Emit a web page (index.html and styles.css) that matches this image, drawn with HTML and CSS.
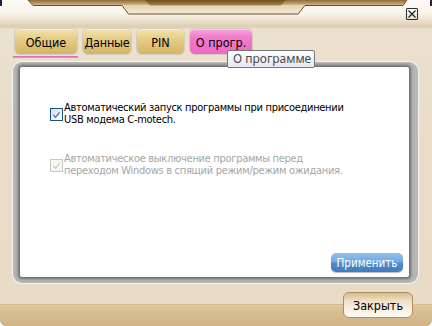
FILE: index.html
```html
<!DOCTYPE html>
<html lang="ru">
<head>
<meta charset="utf-8">
<title>Настройки</title>
<link rel="stylesheet" href="styles.css">
</head>
<body>
<div class="window">
  <span class="corner corner-tl"></span>
  <span class="corner corner-tr"></span>
  <header class="titlebar">
    <svg class="decor" viewBox="0 0 432 28" width="432" height="28">
      <defs>
        <linearGradient id="band" x1="0" y1="0" x2="0" y2="1">
          <stop offset="0" stop-color="#8e6a36"/>
          <stop offset="1" stop-color="#d4bc90"/>
        </linearGradient>
        <linearGradient id="core" x1="0" y1="0" x2="0" y2="1">
          <stop offset="0" stop-color="#6f4e20"/>
          <stop offset="1" stop-color="#b2905a"/>
        </linearGradient>
        <linearGradient id="well" x1="0" y1="0" x2="0" y2="1">
          <stop offset="0" stop-color="#e4d3b2"/>
          <stop offset="1" stop-color="#f4ecdc"/>
        </linearGradient>
      </defs>
      <polygon points="28,0 33,5.5 403,5.5 407,0" fill="url(#band)"/>
      <polygon points="145,0 151,6.5 280,6.5 286,0" fill="url(#core)"/>
      <polygon points="122,5.5 128.5,14 298,14 305,5.5" fill="url(#well)"/>
      <polyline points="28,0 33,5.5 122,5.5 128.5,14 298,14 305,5.5 403,5.5 407,0" fill="none" stroke="#6b4f25" stroke-width="1"/>
    </svg>
    <button class="xbtn" aria-label="Закрыть">
      <svg viewBox="0 0 10 10" width="10" height="10"><path d="M1.5 1.5 L8.5 8.5 M8.5 1.5 L1.5 8.5" stroke="#1a1a1a" stroke-width="1.1" fill="none"/></svg>
    </button>
  </header>

  <nav class="tabs">
    <div class="tab tab-gold tab-general">Общие</div>
    <div class="tab tab-gold tab-data">Данные</div>
    <div class="tab tab-gold tab-pin">PIN</div>
    <div class="tab tab-pink tab-about">О прогр.</div>
  </nav>
  <div class="tab-mark"></div>
  <div class="tooltip">О программе</div>

  <section class="frame">
    <div class="panel">
      <label class="check">
        <span class="box">
          <svg viewBox="0 0 11 11" width="11" height="11"><path d="M2.5 5 L4.5 7.5 L8.5 2.5 L8.5 4.2 L4.5 9 L2.5 6.8 Z" fill="#2f4a9e"/></svg>
        </span>
        <span class="lbl">Автоматический запуск программы при присоединении<br>USB модема C-motech.</span>
      </label>
      <label class="check check-disabled">
        <span class="box">
          <svg viewBox="0 0 11 11" width="11" height="11"><path d="M2.5 5 L4.5 7.5 L8.5 2.5 L8.5 4.2 L4.5 9 L2.5 6.8 Z" fill="#c2c2bc"/></svg>
        </span>
        <span class="lbl">Автоматическое выключение программы перед<br>переходом Windows в спящий режим/режим ожидания.</span>
      </label>
      <div class="actions">
        <button class="apply">Применить</button>
      </div>
    </div>
  </section>

  <footer class="footer">
    <button class="close">Закрыть</button>
  </footer>
</div>
</body>
</html>
```

FILE: styles.css
```css
html, body {
  margin: 0;
  padding: 0;
  background: #ffffff;
}

body {
  font-family: "DejaVu Sans Condensed", "DejaVu Sans", sans-serif;
  font-size: 11px;
  color: #000;
}

.window {
  position: relative;
  width: 432px;
  height: 326px;
  overflow: hidden;
  display: flex;
  flex-direction: column;
  border-radius: 0 0 6px 6px;
  background: linear-gradient(#fdfbf7 0, #f8f3ea 14px, #ddcdb0 27px, #ebe1cf 29px, #e9ddc9 120px, #e8dcc7 100%);
}

.corner {
  position: absolute;
  top: 0;
  width: 2px;
  height: 6px;
  background: #1c2150;
}
.corner-tl { left: 0; }
.corner-tr { right: 0; background: #3a1c3a; }

.titlebar {
  position: relative;
  height: 28px;
  flex: none;
  box-sizing: border-box;
  display: flex;
  justify-content: flex-end;
  align-items: flex-start;
  padding: 8px 14px 0 0;
}

.decor {
  position: absolute;
  left: 0;
  top: 0;
}

.xbtn {
  position: relative;
  width: 12px;
  height: 12px;
  box-sizing: border-box;
  padding: 0;
  border: 1px solid #2a2a2a;
  border-radius: 1px;
  background: linear-gradient(#ffffff, #e9e1d4);
  display: flex;
  align-items: center;
  justify-content: center;
}
.xbtn svg { display: block; }

.tabs {
  display: flex;
  gap: 4px;
  padding-left: 14px;
  height: 27px;
  flex: none;
}

.tab {
  box-sizing: border-box;
  height: 27px;
  border-radius: 6px;
  border: 1px solid #d2ccc1;
  display: flex;
  align-items: center;
  justify-content: center;
  padding-top: 1px;
  white-space: nowrap;
  font-size: 12.5px;
}
.tab-gold {
  background: linear-gradient(#f1e3ad 0, #e7d08c 35%, #dcc076 70%, #d4b567 100%);
  box-shadow: inset 0 1px 0 #fbf4d8;
}
.tab-pink {
  background: linear-gradient(#f8a6dc 0, #f27bcc 35%, #ee68c3 100%);
  box-shadow: inset 0 1px 0 #fcd0ec;
}
.tab-general { width: 64px; }
.tab-data { width: 50px; letter-spacing: -0.2px; }
.tab-pin { width: 49px; }
.tab-about { width: 64px; }

.tab-mark {
  flex: none;
  margin: 1px 0 0 13px;
  width: 65px;
  height: 2px;
  background: linear-gradient(#d463b4, #f194d4);
}

.tooltip {
  position: absolute;
  left: 227px;
  top: 50px;
  width: 88px;
  height: 18px;
  box-sizing: border-box;
  padding: 0 0 0 5px;
  border: 1px solid #767676;
  border-radius: 2px;
  background: linear-gradient(#ffffff, #e6e7f0);
  font-family: "Noto Sans", "Open Sans", sans-serif;
  font-size: 12px;
  line-height: 16px;
  color: #4a4a4a;
  white-space: nowrap;
  z-index: 2;
}

.frame {
  flex: none;
  margin: 4px 0 0 13px;
  width: 405px;
  height: 221px;
  box-sizing: border-box;
  padding: 5px 9px 6px 7px;
  border-radius: 9px;
  background: #b6b6b6;
  box-shadow: 0 0 0 1px rgba(255, 255, 255, 0.7);
  display: flex;
}

.panel {
  flex: 1;
  background: #ffffff;
  border-radius: 2px;
  box-shadow: 0 0 3px 2px #6c6c6c;
  box-sizing: border-box;
  padding: 35px 6px 5px 30px;
  display: flex;
  flex-direction: column;
}

.check {
  display: flex;
  align-items: center;
  gap: 1px;
  line-height: 12px;
  letter-spacing: -0.3px;
}
.check + .check { margin-top: 27px; }

.box {
  flex: none;
  width: 13px;
  height: 13px;
  box-sizing: border-box;
  border: 1px solid #1c5180;
  background: linear-gradient(135deg, #d6dbe6, #ffffff);
  display: flex;
  align-items: center;
  justify-content: center;
}
.box svg { display: block; }

.check-disabled { color: #a6a6a6; }
.check-disabled .box {
  border-color: #cac8bb;
  background: #f6f6f3;
}

.actions {
  margin-top: auto;
  display: flex;
  justify-content: flex-end;
}

.apply {
  width: 72px;
  height: 19px;
  padding: 0;
  border: 0;
  border-radius: 5px;
  background: linear-gradient(#92c0ec 0, #74a9df 45%, #4f8ccd 55%, #3f7bbf 100%);
  box-shadow: 0 1px 1px rgba(60, 60, 60, 0.35);
  color: #ffffff;
  font-family: "DejaVu Sans Condensed", "DejaVu Sans", sans-serif;
  font-size: 11.5px;
}

.footer {
  flex: 1;
  display: flex;
  justify-content: flex-end;
  align-items: flex-start;
  padding: 9px 19px 0 0;
  background: linear-gradient(to bottom, transparent 0, transparent 21px, #c6a672 21px, #e4d0aa 22px, #dbc39a 23px, #d1b385 100%);
}

.close {
  width: 70px;
  height: 26px;
  padding: 0;
  border: 1px solid #ae8f5f;
  border-radius: 6px;
  background: linear-gradient(#d7bd90 0, #eee2ca 35%, #fffdf8 100%);
  color: #000;
  font-family: "DejaVu Sans Condensed", "DejaVu Sans", sans-serif;
  font-size: 12.5px;
}
```
